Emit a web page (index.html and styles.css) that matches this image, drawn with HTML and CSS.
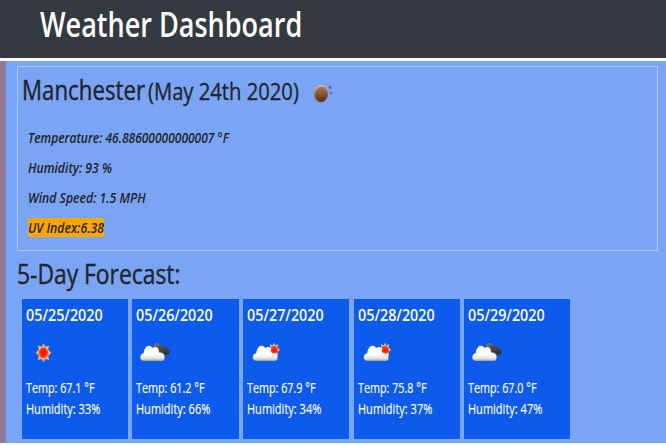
FILE: index.html
```html
<!DOCTYPE html>
<html lang="en">
<head>
<meta charset="utf-8">
<title>Weather Dashboard</title>
<link rel="stylesheet" href="styles.css">
</head>
<body>
<svg class="defs" aria-hidden="true">
  <defs>
    <linearGradient id="white" x1="0" y1="0" x2="0" y2="1"><stop offset=".55" stop-color="#fff"/><stop offset=".85" stop-color="#e2dfdf"/><stop offset="1" stop-color="#999"/></linearGradient>
    <linearGradient id="dark" x1="0" y1="0" x2=".4" y2="1"><stop offset="0" stop-color="#85878c"/><stop offset=".4" stop-color="#505054"/><stop offset="1" stop-color="#38312f"/></linearGradient>
    <linearGradient id="brown" x1="0" y1="0" x2="0" y2="1"><stop offset="0" stop-color="#ad7b55"/><stop offset="1" stop-color="#583012"/></linearGradient>
    <linearGradient id="rim" x1="0" y1="0" x2="0" y2="1"><stop offset="0" stop-color="#d9b8a0"/><stop offset="1" stop-color="#6b4e42"/></linearGradient>
    <radialGradient id="red"><stop offset=".5" stop-color="#fb1606"/><stop offset="1" stop-color="#ff5a20"/></radialGradient>
    <symbol id="sun" viewBox="0 0 18 22" preserveAspectRatio="none"><path d="M9 .8l1.9 3.600 4-1.200-.9 4.400 3.300 3.200-3.300 3.200.9 4.400-4-1.200-1.900 3.600-1.900-3.600-4 1.200.9-4.400L.8 10.800l3.300-3.200-.9-4.400 4 1.200z" fill="#efb474"/><ellipse cx="9" cy="10.800" rx="5" ry="5.800" fill="url(#red)"/></symbol>
    <symbol id="cloud" viewBox="0 0 26 17" preserveAspectRatio="none"><path d="M3.500 17C-.8 16.500-.8 10 3.700 9.300C4.400 1.800 9.500-.2 12.500 4C16 1.500 19.500 4.500 19 8.500C22.500 8.200 24.500 10 24.500 12.500C24.800 15 24 17 22 17z" fill="url(#white)"/></symbol>
  </defs>
</svg>
<header class="banner"><h1 class="title">Weather Dashboard</h1></header>
<main class="main">
  <section class="current">
    <div class="heading">
      <h2 class="city">Manchester</h2>
      <h3 class="day">(May 24th 2020)</h3>
      <svg class="moon" viewBox="0 0 20 20"><ellipse cx="7.800" cy="10.500" rx="7.300" ry="8.800" fill="url(#rim)"/><ellipse cx="8.500" cy="11.300" rx="6.200" ry="7.500" fill="url(#brown)"/><circle cx="16.900" cy="4.500" r="1.400" fill="#6d5c78"/><circle cx="18" cy="10" r="1.200" fill="#6d6795"/></svg>
    </div>
    <p class="stat"><span class="s1">Temperature: 46.88600000000007 °F</span></p>
    <p class="stat"><span class="s2">Humidity: 93 %</span></p>
    <p class="stat"><span class="s2">Wind Speed: 1.5 MPH</span></p>
    <p class="stat"><span class="s2 uv">UV Index:6.38</span></p>
  </section>
  <h2 class="subtitle">5-Day Forecast:</h2>
  <section class="cards">
    <article class="card"><h4 class="date">05/25/2020</h4>
      <svg class="icon" viewBox="0 0 34 24"><use href="#sun" x="9" y="1.500" width="17" height="21"/></svg>
      <p class="temp">Temp: 67.1 °F</p><p class="hum">Humidity: 33%</p></article>
    <article class="card"><h4 class="date">05/26/2020</h4>
      <svg class="icon" viewBox="0 0 34 24"><path d="M18 5.500C18 2 21.500.8 24 3.500L31 7C35 9 34.500 14.500 30 13.800L26 13z" fill="url(#dark)"/><use href="#cloud" x="4" y="3" width="26" height="17"/></svg>
      <p class="temp">Temp: 61.2 °F</p><p class="hum">Humidity: 66%</p></article>
    <article class="card"><h4 class="date">05/27/2020</h4>
      <svg class="icon" viewBox="0 0 34 24"><use href="#sun" x="20.500" y="1" width="13" height="16"/><use href="#cloud" x="5.500" y="3" width="26.500" height="17"/><ellipse cx="27.300" cy="9.500" rx="3.500" ry="3" fill="url(#red)"/></svg>
      <p class="temp">Temp: 67.9 °F</p><p class="hum">Humidity: 34%</p></article>
    <article class="card"><h4 class="date">05/28/2020</h4>
      <svg class="icon" viewBox="0 0 34 24"><use href="#sun" x="20.500" y="1" width="13" height="16"/><use href="#cloud" x="5.500" y="3" width="26.500" height="17"/><ellipse cx="27.300" cy="9.500" rx="3.500" ry="3" fill="url(#red)"/></svg>
      <p class="temp">Temp: 75.8 °F</p><p class="hum">Humidity: 37%</p></article>
    <article class="card"><h4 class="date">05/29/2020</h4>
      <svg class="icon" viewBox="0 0 34 24"><path d="M18 5.500C18 2 21.500.8 24 3.500L31 7C35 9 34.500 14.500 30 13.800L26 13z" fill="url(#dark)"/><use href="#cloud" x="4" y="3" width="26" height="17"/></svg>
      <p class="temp">Temp: 67.0 °F</p><p class="hum">Humidity: 47%</p></article>
  </section>
</main>
</body>
</html>
```
FILE: styles.css
```css
* { box-sizing: border-box; margin: 0; padding: 0; }
html { background: #fff; }
body { font-family: "Open Sans", "Noto Sans", sans-serif; width: 666px; height: 445px; overflow: hidden; color: #212529; }
.defs { display: block; width: 0; height: 0; }
h1, h2, h3, h4, p { white-space: nowrap; transform-origin: 0 50%; width: max-content; }
.banner { height: 58px; background: #343a40; padding: 0 0 0 40px; }
.title { font-size: 34px; line-height: 49px; font-weight: 600; color: #fff; transform: scaleX(.795); }
.main { margin-top: 3px; height: 382px; background: #7aa4f4; border-left: 6px solid #917999; padding: 5px 8px 0 10.500px; }
.current { height: 185px; border: 1px solid #adc8fa; padding: 6px 0 0 4.500px; }
.heading { display: grid; grid-template-columns: 126px 164.500px 20px; height: 49.500px; }
.city { font-size: 27px; line-height: 34px; font-weight: 400; -webkit-text-stroke: .4px currentColor; transform: scaleX(.825); }
.day { font-size: 23.500px; line-height: 36px; font-weight: 400; -webkit-text-stroke: .3px currentColor; transform: scaleX(.86); }
.moon { width: 20px; height: 20px; margin-top: 10px; }
.stat { font-size: 14px; font-style: italic; font-weight: 600; height: 30px; line-height: 30px; padding-left: 6px; }
.stat span { display: inline-block; line-height: 19px; transform-origin: 0 50%; }
.s1 { transform: scaleX(.857); }
.s2 { transform: scaleX(.873); }
.stat .uv { background: #ffa500; }
.subtitle { font-size: 26.500px; line-height: 38px; margin-top: 4px; font-weight: 400; -webkit-text-stroke: .4px currentColor; transform: scaleX(.862); }
.cards { display: flex; gap: 4.300px; margin: 6px 0 0 5.300px; }
.card { width: 106.300px; height: 140px; background: #0d5bed; color: #fff; padding: 5px 0 0 4px; }
.date { font-size: 16px; line-height: 23px; font-weight: 600; transform: scaleX(.895); }
.icon { display: block; width: 34px; height: 24px; margin: 14px 0 12px; }
.temp, .hum { font-size: 14px; line-height: 21px; transform: scaleX(.77); -webkit-text-stroke: .15px currentColor; }
.hum { transform: scaleX(.787); }
```
